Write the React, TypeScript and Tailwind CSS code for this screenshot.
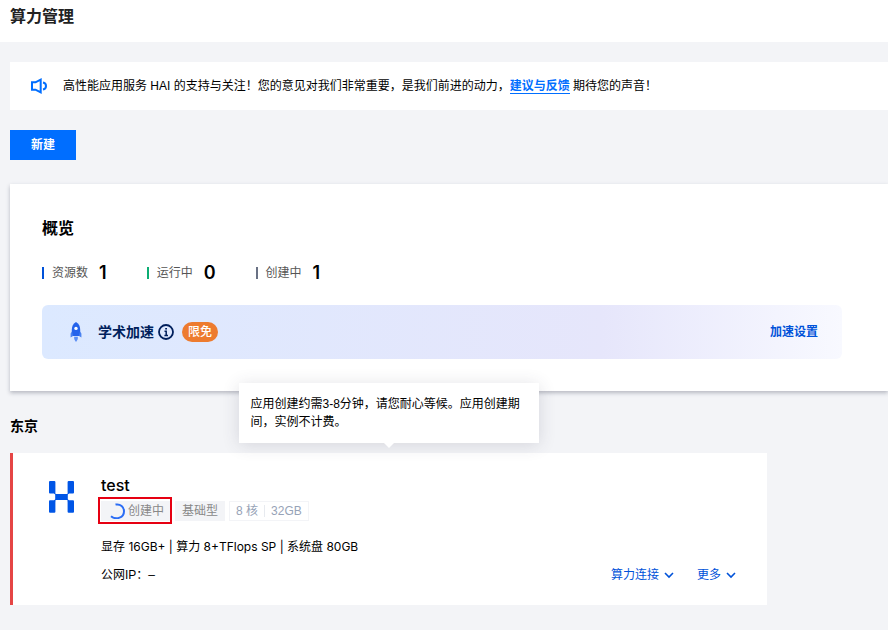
import clsx from "clsx";

const stats = [
  { label: "资源数", value: 1, bar: "bg-[#0052d9]" },
  { label: "运行中", value: 0, bar: "bg-[#0cad73]" },
  { label: "创建中", value: 1, bar: "bg-[#697184]" },
];

function SpeakerIcon() {
  return (
    <svg className="h-[18px] w-[18px] shrink-0" viewBox="0 0 18 18" fill="none" stroke="#006eff" strokeWidth="2">
      <path d="M2 5.3H5.5L10.7 2.6V15.4L5.5 12.7H2Z" />
      <path d="M13 5.4C17 6.2 17 11.8 13 12.6" />
    </svg>
  );
}

function RocketIcon() {
  return (
    <svg className="h-5 w-5 shrink-0" viewBox="0 0 20 20">
      <path fill="#2563eb" d="M10 0C7 1.6 5.8 4.6 5.8 7.8V14H14.2V7.8C14.2 4.6 13 1.6 10 0Z" />
      <path fill="#4a82f0" d="M6 9.5L4.6 11.4V15.4L7 14ZM14 9.5L15.4 11.4V15.4L13 14Z" />
      <circle cx="10" cy="6.4" r="1.7" fill="#fff" />
      <path fill="#5b8ff5" d="M8.2 14.8H11.8C12.2 17 11.2 18.6 10 20C8.8 18.6 7.8 17 8.2 14.8Z" />
    </svg>
  );
}

function InfoIcon() {
  return (
    <svg className="h-4 w-4" viewBox="0 0 16 16" fill="none" stroke="#001f5c" strokeWidth="1.8">
      <circle cx="8" cy="8" r="7" />
      <path d="M6.5 7.2H8.2V11.6M6.4 11.4H10M7.2 4.7H9" strokeWidth="1.5" />
    </svg>
  );
}

function HaiLogo() {
  return (
    <svg className="h-8 w-[25px] shrink-0" viewBox="0 0 25 32" fill="#0055e6">
      <rect x="0" y="0" width="6.4" height="12.6" rx="1" />
      <rect x="18.6" y="0" width="6.4" height="12.6" rx="1" />
      <rect x="0" y="19.2" width="6.4" height="12.6" rx="1" />
      <rect x="18.6" y="19.2" width="6.4" height="12.6" rx="1" />
      <path d="M5 11.5L7.2 12.9H17.8L20 11.5V12.6L18.8 13.6V18.2L20 19.4V20.4L17.8 18.9H7.2L5 20.4V19.4L6.2 18.2V13.6L5 12.6Z" />
    </svg>
  );
}

function Spinner() {
  return (
    <svg className="h-4 w-4" viewBox="0 0 16 16" fill="none" stroke="#2b6df5" strokeWidth="2">
      <path d="M6.5 1.6C11.5 .6 15 4 15 8.2C15 14.4 7.5 17.6 2 13.2" />
    </svg>
  );
}

function MenuButton({ label }: { label: string }) {
  return (
    <button type="button" className="flex items-center gap-1 text-[#0052d9]">
      {label}
      <svg className="h-3 w-3" viewBox="0 0 12 12" fill="none" stroke="currentColor" strokeWidth="1.6">
        <path d="M2 4L6 8L10 4" />
      </svg>
    </button>
  );
}

function Overview() {
  return (
    <section className="mt-6 bg-white px-8 pt-[33px] pb-8 shadow-[0_2px_4px_rgba(54,58,80,0.32)]">
      <h2 className="text-base leading-6 font-bold">概览</h2>
      <ul className="mt-5 flex gap-10">
        {stats.map((stat) => (
          <li key={stat.label} className="flex h-6 items-center">
            <span className={clsx("h-3 w-[2px]", stat.bar)} />
            <span className="ml-2 text-[#555]">{stat.label}</span>
            <span className="ml-[11px] font-[Inter] text-lg leading-6 font-semibold">{stat.value}</span>
          </li>
        ))}
      </ul>

      <div className="mt-5 flex h-[54px] max-w-[800px] items-center rounded-md bg-linear-to-r from-[#dce9ff] via-[#e6e6fb] via-70% to-[#f8f9ff] px-6">
        <RocketIcon />
        <h3 className="ml-3 text-sm font-bold text-[#001f5c]">学术加速</h3>
        <button type="button" aria-label="学术加速" className="ml-1">
          <InfoIcon />
        </button>
        <span className="ml-2 rounded-full bg-[#ed7b2f] px-[6px] leading-5 font-medium text-white">限免</span>
        <a href="#" className="ml-auto font-bold text-[#0052d9]">
          加速设置
        </a>
      </div>
    </section>
  );
}

function InstanceCard() {
  return (
    <article className="relative mt-4 flex max-w-[757px] bg-white py-5 pr-[30px] pl-[39px] shadow-[inset_3px_0_#e54545]">
      <div role="tooltip" className="absolute bottom-full left-1/2 mb-[10px] w-[300px] -translate-x-1/2 bg-white p-3 leading-[18px] shadow-[0_2px_16px_rgba(54,58,80,0.16)]">
        应用创建约需3-8分钟，请您耐心等候。应用创建期间，实例不计费。
        <span className="absolute top-full left-1/2 -translate-x-1/2 border-x-5 border-t-5 border-transparent border-t-white" />
      </div>

      <div className="pt-2">
        <HaiLogo />
      </div>
      <div className="ml-[27px] flex-1">
        <h3 className="font-[Inter] text-base leading-6 font-medium">test</h3>
        <div className="mt-1 flex h-5 gap-1 leading-5">
          <span className="relative flex items-center gap-[3px] bg-[#f3f4f7] pr-[7px] pl-2 text-[#888]">
            <Spinner />
            创建中
            <span className="absolute -top-1 right-[-1px] bottom-[-3px] left-[-3px] border-2 border-[#e60012]" />
          </span>
          <span className="bg-[#f3f4f7] px-[7px] text-[#888]">基础型</span>
          <span className="flex items-center border border-[#f3f4f7] text-[#97a3b7]">
            <span className="px-[6px]">8 核</span>
            <span className="h-3 w-px bg-[#e7eaef]" />
            <span className="px-[6px]">32GB</span>
          </span>
        </div>
        <p className="mt-4 font-['Inter','Noto_Sans_CJK_SC',sans-serif] leading-5">显存 16GB+ | 算力 8+TFlops SP | 系统盘 80GB</p>
        <div className="mt-2 flex justify-between leading-5">
          <p>公网IP：–</p>
          <div className="flex gap-[22px]">
            <MenuButton label="算力连接" />
            <MenuButton label="更多" />
          </div>
        </div>
      </div>
    </article>
  );
}

export default function App() {
  return (
    <div className="min-h-screen overflow-x-hidden bg-[#f3f4f7] font-['Liberation_Sans','Noto_Sans_CJK_SC',sans-serif] text-xs text-black">
      <header className="bg-white px-[10px] pt-[5px] pb-[13px]">
        <h1 className="text-base leading-6 font-bold text-[#222]">算力管理</h1>
      </header>

      <main className="pt-5 pb-6 pl-[10px]">
        <div className="flex h-12 items-center gap-[15px] bg-white px-5">
          <SpeakerIcon />
          <p>
            高性能应用服务 HAI 的支持与关注！您的意见对我们非常重要，是我们前进的动力，
            <a href="#" className="border-b border-[#006eff] font-bold text-[#006eff]">
              建议与反馈
            </a>{" "}
            期待您的声音！
          </p>
        </div>

        <button type="button" className="mt-5 block h-[30px] bg-[#006eff] px-[21px] font-bold text-white">
          新建
        </button>

        <Overview />

        <h2 className="mt-6 text-sm leading-[22px] font-bold">东京</h2>
        <InstanceCard />
      </main>
    </div>
  );
}
